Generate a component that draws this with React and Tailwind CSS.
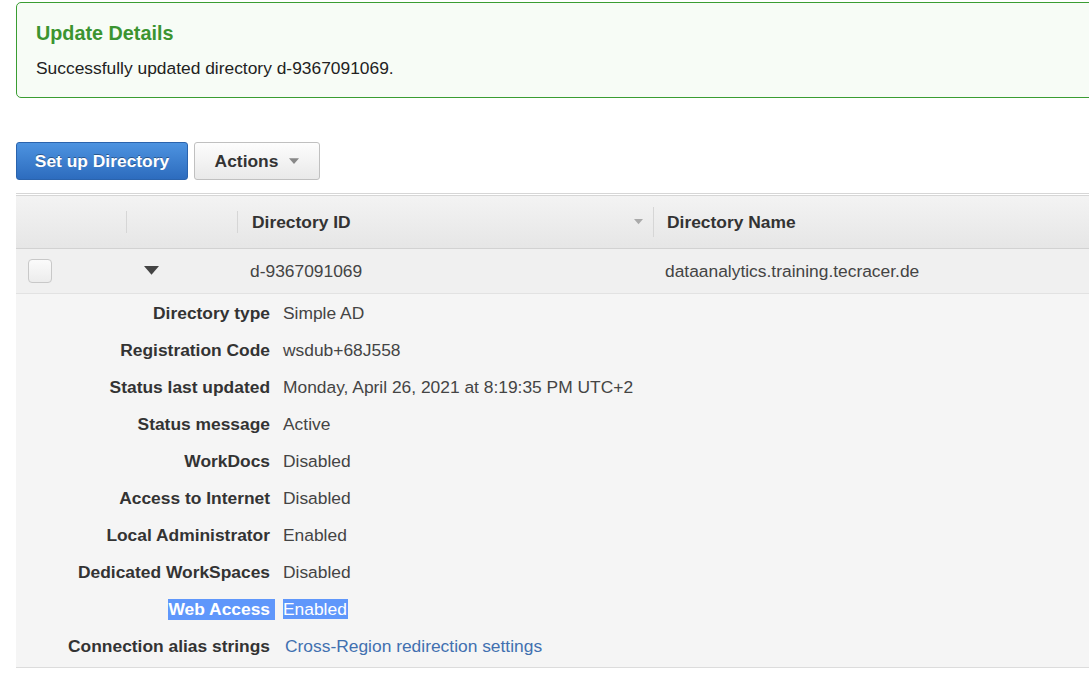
import React from "react";

const details = [
  ["Directory type", "Simple AD"],
  ["Registration Code", "wsdub+68J558"],
  ["Status last updated", "Monday, April 26, 2021 at 8:19:35 PM UTC+2"],
  ["Status message", "Active"],
  ["WorkDocs", "Disabled"],
  ["Access to Internet", "Disabled"],
  ["Local Administrator", "Enabled"],
  ["Dedicated WorkSpaces", "Disabled"],
];

function Caret({ className }) {
  return (
    <svg width="12" height="8" viewBox="0 0 12 8" className={className}>
      <path d="M0 0 H12 L6 7 Z" fill="currentColor" />
    </svg>
  );
}

export default function App() {
  return (
    <div
      className="w-[1089px] h-[675px] overflow-hidden bg-white text-[#333] text-[17.4px]"
      style={{ fontFamily: '"Liberation Sans", Arial, sans-serif' }}
    >
      <div className="pl-4 pt-[2px] w-[1120px]">
        {/* alert */}
        <div className="h-[96px] border border-[#3a9d32] rounded-[5px] bg-[#f7fcf6] pl-[19px] pt-[19px]">
          <div className="text-[19.8px] font-bold text-[#3b9430] leading-[22px]">Update Details</div>
          <div className="mt-[14px] text-[#222] leading-[20px]">Successfully updated directory d-9367091069.</div>
        </div>

        {/* buttons */}
        <div className="flex gap-[6px] mt-[44px]">
          <button className="h-[38px] w-[172px] rounded-[3px] border border-[#2a63ad] bg-gradient-to-b from-[#4d93e0] to-[#2d6cbe] text-white font-bold [text-shadow:0_-1px_0_rgba(0,0,0,0.35)]">
            Set up Directory
          </button>
          <button className="h-[38px] w-[126px] rounded-[3px] border border-[#c0c0c0] bg-gradient-to-b from-[#fdfdfd] to-[#e9e9e9] text-[#333] font-bold flex items-center justify-center gap-[11px]">
            Actions
            <Caret className="text-[#888] w-[10px] h-[7px]" />
          </button>
        </div>

        {/* table */}
        <div className="mt-[13px] border-t-[3px] border-double border-[#d6d6d6]">
          <div className="h-[53px] flex items-center bg-gradient-to-b from-[#f3f3f3] to-[#e6e6e6] border-b border-[#d2d2d2] font-bold text-[#333]">
            <div className="w-[111px] h-[22px] border-r border-[#d6d6d6]" />
            <div className="w-[111px] h-[22px] border-r border-[#d6d6d6]" />
            <div className="w-[415px] flex items-center justify-between pl-[14px] pr-[10px]">
              <span>Directory ID</span>
              <Caret className="text-[#aaa] w-[9px] h-[6px]" />
            </div>
            <div className="h-[30px] border-l border-[#d6d6d6] flex items-center pl-[13px]">Directory Name</div>
          </div>
          <div className="h-[45px] flex items-center bg-[#f0f0f0] border-b border-[#e2e2e2] text-[#444]">
            <div className="w-[111px] pl-[12px]">
              <div className="w-[24px] h-[24px] rounded-[4px] border border-[#c8c8c8] bg-gradient-to-b from-[#fbfbfb] to-[#ececec]" />
            </div>
            <div className="w-[111px] pl-[17px]">
              <Caret className="text-[#444] w-[15px] h-[10px]" />
            </div>
            <div className="w-[427px] pl-[12px]">d-9367091069</div>
            <div>dataanalytics.training.tecracer.de</div>
          </div>
          <div className="bg-[#f5f5f5] border-b border-[#dcdcdc] pt-[1px] pb-[2px]">
            {details.map(([k, v]) => (
              <div key={k} className="h-[37px] flex items-center">
                <div className="w-[254px] text-right font-bold text-[#333]">{k}</div>
                <div className="pl-[13px] text-[#444]">{v}</div>
              </div>
            ))}
            <div className="h-[37px] flex items-center">
              <div className="w-[259px] flex justify-end">
                <span className="bg-[#5f97fb] text-white font-bold pl-[1px] pr-[5px] leading-[21px]">Web Access</span>
              </div>
              <div className="pl-[8px]">
                <span className="bg-[#5f97fb] text-white leading-[21px] pr-[1px]">Enabled</span>
              </div>
            </div>
            <div className="h-[37px] flex items-center">
              <div className="w-[254px] text-right font-bold text-[#333]">Connection alias strings</div>
              <div className="pl-[15px] text-[#4170b0]">Cross-Region redirection settings</div>
            </div>
          </div>
        </div>
      </div>
    </div>
  );
}
